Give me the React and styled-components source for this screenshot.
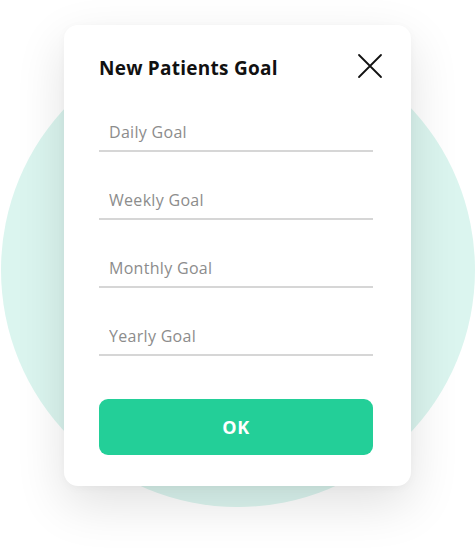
import React from "react";
import styled, { createGlobalStyle } from "styled-components";

const GlobalStyle = createGlobalStyle`
  html, body {
    margin: 0;
    padding: 0;
    background: #ffffff;
  }
  body {
    font-family: "Open Sans", "Noto Sans", sans-serif;
  }
`;

const fields = ["Daily Goal", "Weekly Goal", "Monthly Goal", "Yearly Goal"];

const App = () => {
  return (
    <Stage>
      <GlobalStyle />
      <Circle />
      <Card>
        <Header>
          <Title>New Patients Goal</Title>
          <CloseButton aria-label="Close">
            <svg width="26" height="26" viewBox="0 0 26 26">
              <path
                d="M2 2 L24 24 M24 2 L2 24"
                stroke="#111"
                strokeWidth="1.8"
                strokeLinecap="round"
              />
            </svg>
          </CloseButton>
        </Header>
        <Form>
          {fields.map((f) => (
            <Field key={f} placeholder={f} />
          ))}
          <OkButton type="button">OK</OkButton>
        </Form>
      </Card>
    </Stage>
  );
};

const Stage = styled.div`
  width: 475px;
  height: 552px;
  display: grid;
  overflow: hidden;
  > * {
    grid-area: 1 / 1;
  }
`;

const Circle = styled.div`
  width: 474px;
  height: 474px;
  margin: 33px 0 0 1px;
  border-radius: 50%;
  background: #dbf5ef;
`;

const Card = styled.div`
  align-self: start;
  justify-self: start;
  margin: 25px 0 0 64px;
  width: 347px;
  box-sizing: border-box;
  padding: 31px 38px 31px 35px;
  background: #ffffff;
  border-radius: 14px;
  box-shadow: 0 18px 50px rgba(0, 0, 0, 0.12), 0 2px 10px rgba(0, 0, 0, 0.03);
  display: flex;
  flex-direction: column;
`;

const Header = styled.div`
  display: flex;
  justify-content: space-between;
  align-items: flex-start;
  height: 24px;
`;

const Title = styled.h2`
  margin: 0;
  font-size: 19px;
  line-height: 24px;
  font-weight: 700;
  letter-spacing: 0.25px;
  color: #111111;
`;

const CloseButton = styled.button`
  border: none;
  background: none;
  padding: 0;
  margin: -3px -10px 0 0;
  width: 26px;
  height: 26px;
  cursor: pointer;
  svg {
    display: block;
  }
`;

const Form = styled.div`
  display: flex;
  flex-direction: column;
  margin-top: 4px;
`;

const Field = styled.input`
  margin-top: 30px;
  height: 38px;
  box-sizing: border-box;
  padding: 0 0 0 10px;
  border: none;
  border-bottom: 2px solid #d6d6d6;
  outline: none;
  font-family: "Open Sans", sans-serif;
  font-size: 16px;
  letter-spacing: 0.3px;
  color: #333;
  background: transparent;
  &::placeholder {
    color: #8c8c8c;
  }
`;

const OkButton = styled.button`
  margin-top: 43px;
  height: 56px;
  border: none;
  border-radius: 9px;
  background: #23cf98;
  color: #ffffff;
  font-family: "Open Sans", sans-serif;
  font-size: 18px;
  font-weight: 700;
  letter-spacing: 0.5px;
  cursor: pointer;
`;

export default App;
